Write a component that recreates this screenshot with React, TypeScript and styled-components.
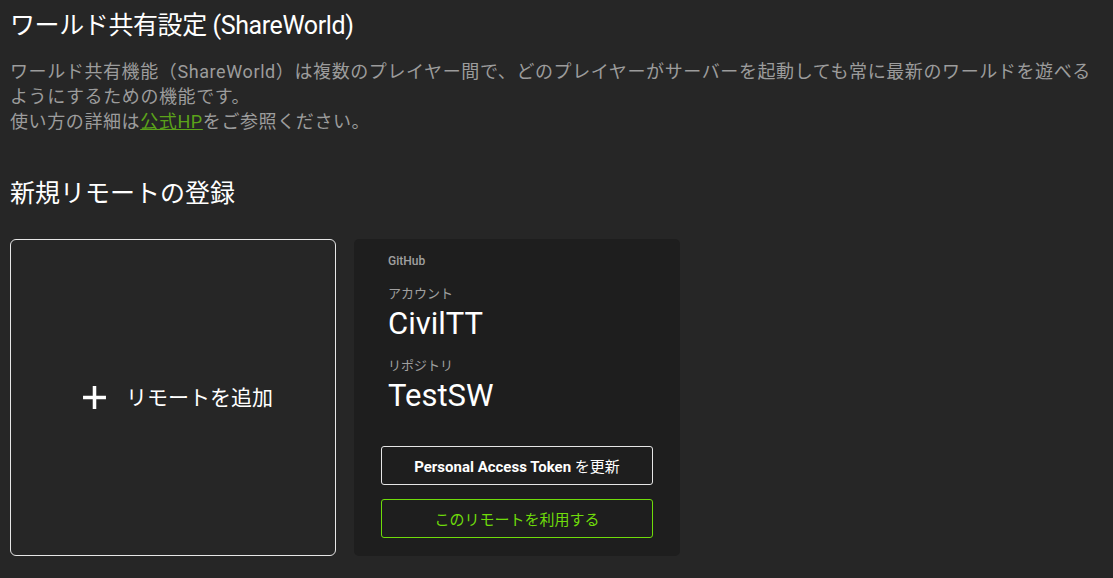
import React from "react";
import styled, { createGlobalStyle } from "styled-components";

const GlobalStyle = createGlobalStyle`
  body {
    margin: 0;
    background: #262626;
    font-family: Roboto, "Noto Sans CJK JP", sans-serif;
    color: #ffffff;
  }
`;

const Page = () => (
  <>
    <GlobalStyle />
    <Container>
      <Title>ワールド共有設定 (ShareWorld)</Title>
      <Description>
        ワールド共有機能（ShareWorld）は複数のプレイヤー間で、どのプレイヤーがサーバーを起動しても常に最新のワールドを遊べるようにするための機能です。
        <br />
        使い方の詳細は<Link href="#">公式HP</Link>をご参照ください。
      </Description>
      <SectionTitle>新規リモートの登録</SectionTitle>
      <CardRow>
        <AddCard>
          <PlusIcon viewBox="0 0 24 24">
            <path d="M12 1v22M1 12h22" stroke="#fff" strokeWidth="3.4" />
          </PlusIcon>
          <AddLabel>リモートを追加</AddLabel>
        </AddCard>
        <RemoteCard>
          <Provider>GitHub</Provider>
          <FieldLabel>アカウント</FieldLabel>
          <FieldValue>CivilTT</FieldValue>
          <FieldLabel>リポジトリ</FieldLabel>
          <FieldValue>TestSW</FieldValue>
          <Buttons>
            <ActionButton>
              <b>Personal Access Token</b> を更新
            </ActionButton>
            <ActionButton $accent>このリモートを利用する</ActionButton>
          </Buttons>
        </RemoteCard>
      </CardRow>
    </Container>
  </>
);

export default Page;

const Container = styled.div`
  padding: 9px 10px;
`;

const Title = styled.h1`
  margin: 0;
  font-size: 25px;
  font-weight: 400;
  line-height: 34px;
  letter-spacing: -0.4px;
`;

const Description = styled.p`
  margin: 16px 0 0;
  font-size: 18px;
  line-height: 25px;
  letter-spacing: 0.6px;
  color: #9c9c9c;
`;

const Link = styled.a`
  color: #5ba31a;
  text-decoration: underline;
`;

const SectionTitle = styled.h2`
  margin: 43px 0 0;
  font-size: 25px;
  font-weight: 400;
  line-height: 34px;
`;

const CardRow = styled.div`
  display: flex;
  gap: 18px;
  margin-top: 28px;
`;

const AddCard = styled.button`
  width: 326px;
  height: 317px;
  box-sizing: border-box;
  border: 1px solid #e6e6e6;
  border-radius: 6px;
  background: transparent;
  color: #fff;
  display: flex;
  align-items: center;
  justify-content: center;
  gap: 19px;
  padding: 0 0 0 9px;
  cursor: pointer;
  font-family: inherit;
`;

const PlusIcon = styled.svg`
  width: 25px;
  height: 25px;
`;

const AddLabel = styled.span`
  font-size: 21px;
  line-height: 24px;
`;

const RemoteCard = styled.div`
  width: 326px;
  height: 317px;
  box-sizing: border-box;
  background: #1e1e1e;
  border-radius: 5px;
  padding: 14px 27px 0 34px;
  display: flex;
  flex-direction: column;
`;

const Provider = styled.div`
  font-size: 12px;
  line-height: 16px;
  color: #a0a0a0;
  font-weight: 500;
  margin-bottom: 17px;
`;

const FieldLabel = styled.div`
  font-size: 13px;
  line-height: 16px;
  color: #a0a0a0;
  margin-bottom: 4px;
`;

const FieldValue = styled.div`
  font-size: 31px;
  line-height: 36px;
  color: #fff;
  margin-bottom: 16px;
`;

const Buttons = styled.div`
  display: flex;
  flex-direction: column;
  gap: 14px;
  margin: 16px 0 0 -7px;
`;

const ActionButton = styled.button<{ $accent?: boolean }>`
  height: 39px;
  border-radius: 3px;
  background: transparent;
  border: 1px solid ${(p) => (p.$accent ? "#6fdc0a" : "#e6e6e6")};
  color: ${(p) => (p.$accent ? "#6fdc0a" : "#fff")};
  font-family: inherit;
  font-size: 15px;
  cursor: pointer;

  b {
    font-weight: 700;
  }
`;
